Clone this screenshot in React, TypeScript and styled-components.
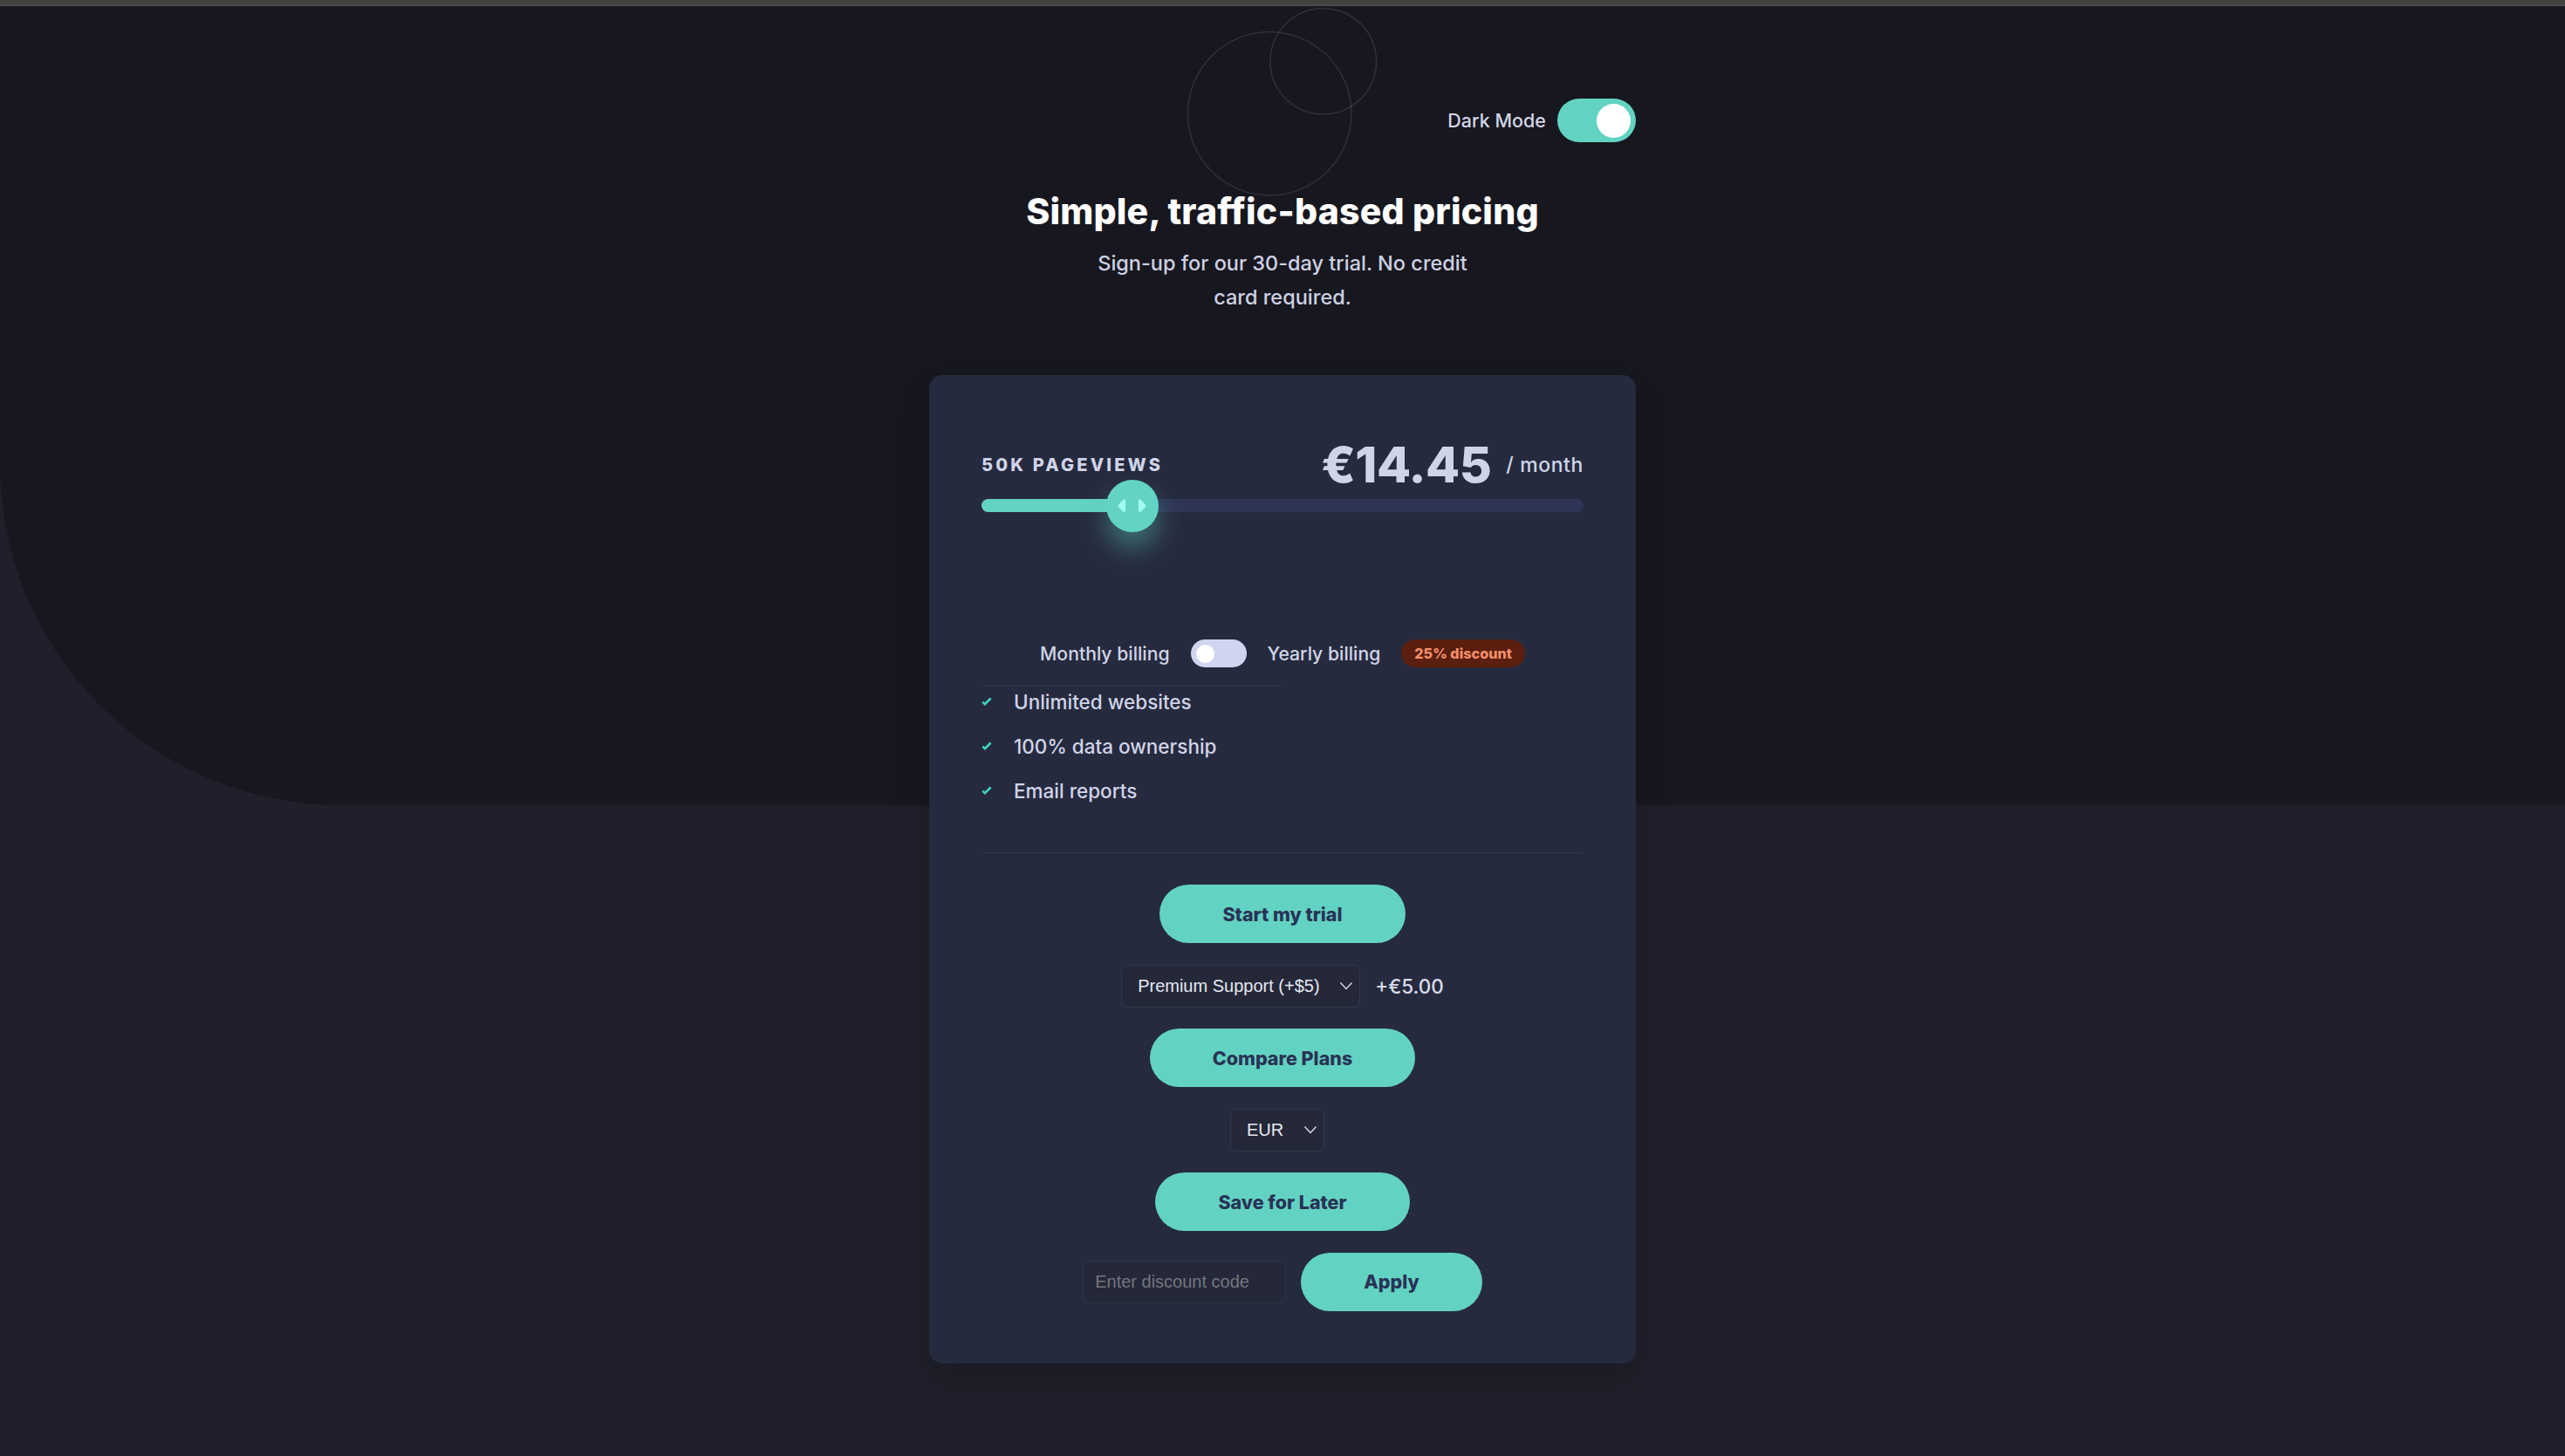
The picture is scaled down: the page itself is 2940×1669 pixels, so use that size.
import React, { useState } from "react";
import styled, { createGlobalStyle } from "styled-components";

const GlobalStyle = createGlobalStyle`
  * { box-sizing: border-box; }
  html, body { margin: 0; padding: 0; }
  body {
    background: #1f202b;
    font-family: Inter, "Noto Sans", "DejaVu Sans", sans-serif;
    color: #d0d4e8;
  }
`;

const TopBar = styled.div`
  height: 7px;
  background: #414141;
  border-bottom: 2px solid #4b4b4b;
`;

const Page = styled.div`
  position: relative;
  min-height: 1662px;
`;

const BgShape = styled.div`
  position: absolute;
  top: 0;
  left: 0;
  right: 0;
  height: 916px;
  background: #17171f;
  border-bottom-left-radius: 391px;
  z-index: 0;
`;

const Main = styled.main`
  position: relative;
  z-index: 1;
  width: 810px;
  margin: 0 auto;
  padding-top: 106px;
  display: flex;
  flex-direction: column;
`;

const Header = styled.header`
  position: relative;
  display: flex;
  flex-direction: column;
  align-items: center;
`;

const Circles = styled.svg`
  position: absolute;
  left: 295px;
  top: -105px;
  width: 219px;
  height: 217.5px;
  pointer-events: none;
`;

const ModeRow = styled.div`
  align-self: stretch;
  display: flex;
  justify-content: flex-end;
  align-items: center;
  gap: 13px;
  height: 50px;
  position: relative;
`;

const ModeLabel = styled.span`
  font-size: 21.5px;
  font-weight: 500;
  color: #d3d6e6;
`;

const Switch = styled.button<{ $on: boolean; $w: number; $h: number; $knob: number; $bg: string }>`
  width: ${(p) => p.$w}px;
  height: ${(p) => p.$h}px;
  border: none;
  border-radius: ${(p) => p.$h / 2}px;
  background: ${(p) => p.$bg};
  padding: 0 6px;
  display: flex;
  align-items: center;
  justify-content: ${(p) => (p.$on ? "flex-end" : "flex-start")};
  cursor: pointer;
  flex-shrink: 0;
  &::after {
    content: "";
    width: ${(p) => p.$knob}px;
    height: ${(p) => p.$knob}px;
    border-radius: 50%;
    background: #ffffff;
  }
`;

const Title = styled.h1`
  margin: 55px 0 0;
  font-size: 41px;
  line-height: 48px;
  font-weight: 800;
  color: #ffffff;
  letter-spacing: 0.2px;
  position: relative;
`;

const Subtitle = styled.p`
  margin: 16px 0 0;
  font-size: 23.5px;
  line-height: 39px;
  font-weight: 500;
  color: #cdd1e3;
  text-align: center;
  position: relative;
`;

const Card = styled.section`
  margin-top: 70px;
  background: #262a3e;
  border-radius: 15px;
  padding: 73px 60px 60px;
  box-shadow: 0 20px 40px rgba(0, 0, 0, 0.18);
  display: flex;
  flex-direction: column;
`;

const PriceRow = styled.div`
  display: flex;
  justify-content: space-between;
  align-items: center;
  height: 60px;
`;

const Views = styled.span`
  font-size: 20px;
  font-weight: 800;
  letter-spacing: 3.2px;
  color: #d0d4e8;
`;

const PriceBox = styled.div`
  display: flex;
  align-items: center;
  gap: 17px;
`;

const Price = styled.span`
  font-size: 57px;
  line-height: 60px;
  font-weight: 800;
  letter-spacing: -0.6px;
  color: #d0d4e8;
`;

const Per = styled.span`
  font-size: 23px;
  font-weight: 500;
  letter-spacing: 0.6px;
  color: #d0d4e8;
`;

const Track = styled.div`
  position: relative;
  margin-top: 9px;
  height: 15px;
  border-radius: 8px;
  background: #2f3556;
`;

const Fill = styled.div`
  height: 100%;
  border-radius: 8px 0 0 8px;
  background: #62d3c2;
`;

const Thumb = styled.div`
  position: absolute;
  top: 50%;
  width: 60px;
  height: 60px;
  margin-left: -30px;
  margin-top: -30px;
  border-radius: 50%;
  background: #63d4c3;
  box-shadow: 0 18px 30px rgba(98, 211, 194, 0.42);
  display: flex;
  align-items: center;
  justify-content: center;
`;

const BillingRow = styled.div`
  margin-top: 145px;
  display: flex;
  align-items: center;
  justify-content: center;
  gap: 24px;
  height: 34px;
`;

const BillingLabel = styled.span`
  font-size: 21.2px;
  font-weight: 500;
  color: #d0d4e8;
`;

const Badge = styled.span`
  height: 32px;
  padding: 0 15px;
  border-radius: 16px;
  background: #5a1f0f;
  color: #f48e6a;
  font-size: 16.2px;
  font-weight: 800;
  display: flex;
  align-items: center;
`;

const Divider = styled.div<{ $width: string; $top: number }>`
  width: ${(p) => p.$width};
  height: 1px;
  background: #31364c;
  margin-top: ${(p) => p.$top}px;
`;

const Features = styled.ul`
  list-style: none;
  margin: 0;
  padding: 0;
  display: flex;
  flex-direction: column;
  gap: 17px;
`;

const Feature = styled.li`
  display: flex;
  align-items: center;
  gap: 25px;
  height: 34px;
  font-size: 22.5px;
  font-weight: 500;
  color: #d0d4e8;
`;

const Actions = styled.div`
  margin-top: 36px;
  display: flex;
  flex-direction: column;
  align-items: center;
  gap: 24.6px;
`;

const PillButton = styled.button`
  height: 67px;
  padding: 0 72px;
  border: none;
  border-radius: 34px;
  background: #62d3c2;
  color: #293356;
  font-family: Inter, "Noto Sans", sans-serif;
  font-size: 21.5px;
  font-weight: 800;
  cursor: pointer;
`;

const InlineRow = styled.div`
  display: flex;
  align-items: center;
  gap: 17px;
`;

const SelectWrap = styled.div<{ $shift?: number }>`
  position: relative;
  display: inline-flex;
  margin-right: ${(p) => p.$shift ?? 0}px;
`;

const Select = styled.select`
  appearance: none;
  -webkit-appearance: none;
  height: 49px;
  padding: 0 45px 0 18px;
  border: 1.5px solid #33384f;
  border-radius: 7px;
  background: #242839;
  color: #e6e8f1;
  font-family: "Liberation Sans", Arial, sans-serif;
  font-size: 20px;
`;

const Chevron = styled.svg`
  position: absolute;
  right: 8px;
  top: 50%;
  margin-top: -5px;
  width: 16px;
  height: 10px;
  pointer-events: none;
`;

const Extra = styled.span`
  font-size: 22.5px;
  font-weight: 500;
  color: #d8dbea;
`;

const CodeInput = styled.input`
  width: 233px;
  height: 49px;
  padding: 0 13px;
  border: 1.5px solid #30344a;
  border-radius: 7px;
  background: #242839;
  color: #e6e8f1;
  font-family: "Liberation Sans", Arial, sans-serif;
  font-size: 20px;
  &::placeholder {
    color: #74757f;
  }
`;

const ChevronIcon = () => (
  <Chevron viewBox="0 0 16 10" fill="none">
    <polyline points="1.5,1.5 8,8.5 14.5,1.5" stroke="#d6d9e6" strokeWidth="1.5" />
  </Chevron>
);

const Check = () => (
  <svg width="12" height="11" viewBox="0 0 9 8">
    <path fill="none" stroke="#3fd3bf" strokeWidth="2" d="M1 4.134l1.907 1.908L7.949 1" />
  </svg>
);

export default function App() {
  const [dark, setDark] = useState(true);
  const [yearly, setYearly] = useState(false);
  const percent = 25;

  return (
    <>
      <GlobalStyle />
      <TopBar />
      <Page>
        <BgShape />
        <Main>
          <Header>
            <Circles viewBox="0 0 146 145">
              <g fill="none" stroke="#CFD8EF" strokeOpacity="0.13">
                <circle cx="63.5" cy="81.5" r="62.5" />
                <circle cx="104.5" cy="41.5" r="40.5" />
              </g>
            </Circles>
            <ModeRow>
              <ModeLabel>Dark Mode</ModeLabel>
              <Switch
                $on={dark}
                $w={90}
                $h={50}
                $knob={39}
                $bg="#62d3c2"
                onClick={() => setDark(!dark)}
                aria-label="Dark Mode"
              />
            </ModeRow>
            <Title>Simple, traffic-based pricing</Title>
            <Subtitle>
              Sign-up for our 30-day trial. No credit
              <br />
              card required.
            </Subtitle>
          </Header>

          <Card>
            <PriceRow>
              <Views>50K PAGEVIEWS</Views>
              <PriceBox>
                <Price>€14.45</Price>
                <Per>/ month</Per>
              </PriceBox>
            </PriceRow>
            <Track>
              <Fill style={{ width: `${percent}%` }} />
              <Thumb style={{ left: `${percent}%` }}>
                <svg width="33" height="19.5" viewBox="0 0 22 13">
                  <path
                    fill="#a2fcef"
                    d="M16 2.558v7.884a1 1 0 001.735.679l3.639-3.943a1 1 0 000-1.356l-3.64-3.943A1 1 0 0016 2.558zM6 2.558v7.884a1 1 0 01-1.735.679L.626 7.178a1 1 0 010-1.356l3.64-3.943A1 1 0 016 2.558z"
                  />
                </svg>
              </Thumb>
            </Track>

            <BillingRow>
              <BillingLabel>Monthly billing</BillingLabel>
              <Switch
                $on={yearly}
                $w={64}
                $h={32}
                $knob={21}
                $bg="#cfd5ee"
                onClick={() => setYearly(!yearly)}
                aria-label="Yearly billing"
              />
              <BillingLabel>Yearly billing</BillingLabel>
              <Badge>25% discount</Badge>
            </BillingRow>

            <Divider $width="50%" $top={20} />
            <Features>
              <Feature>
                <Check />
                Unlimited websites
              </Feature>
              <Feature>
                <Check />
                100% data ownership
              </Feature>
              <Feature>
                <Check />
                Email reports
              </Feature>
            </Features>
            <Divider $width="100%" $top={54} />

            <Actions>
              <PillButton>Start my trial</PillButton>
              <InlineRow>
                <SelectWrap>
                  <Select defaultValue="premium">
                    <option value="premium">Premium Support (+$5)</option>
                    <option value="none">No Support</option>
                  </Select>
                  <ChevronIcon />
                </SelectWrap>
                <Extra>+€5.00</Extra>
              </InlineRow>
              <PillButton>Compare Plans</PillButton>
              <SelectWrap $shift={12}>
                <Select defaultValue="EUR">
                  <option value="EUR">EUR</option>
                  <option value="USD">USD</option>
                </Select>
                <ChevronIcon />
              </SelectWrap>
              <PillButton>Save for Later</PillButton>
              <InlineRow>
                <CodeInput placeholder="Enter discount code" />
                <PillButton>Apply</PillButton>
              </InlineRow>
            </Actions>
          </Card>
        </Main>
      </Page>
    </>
  );
}
